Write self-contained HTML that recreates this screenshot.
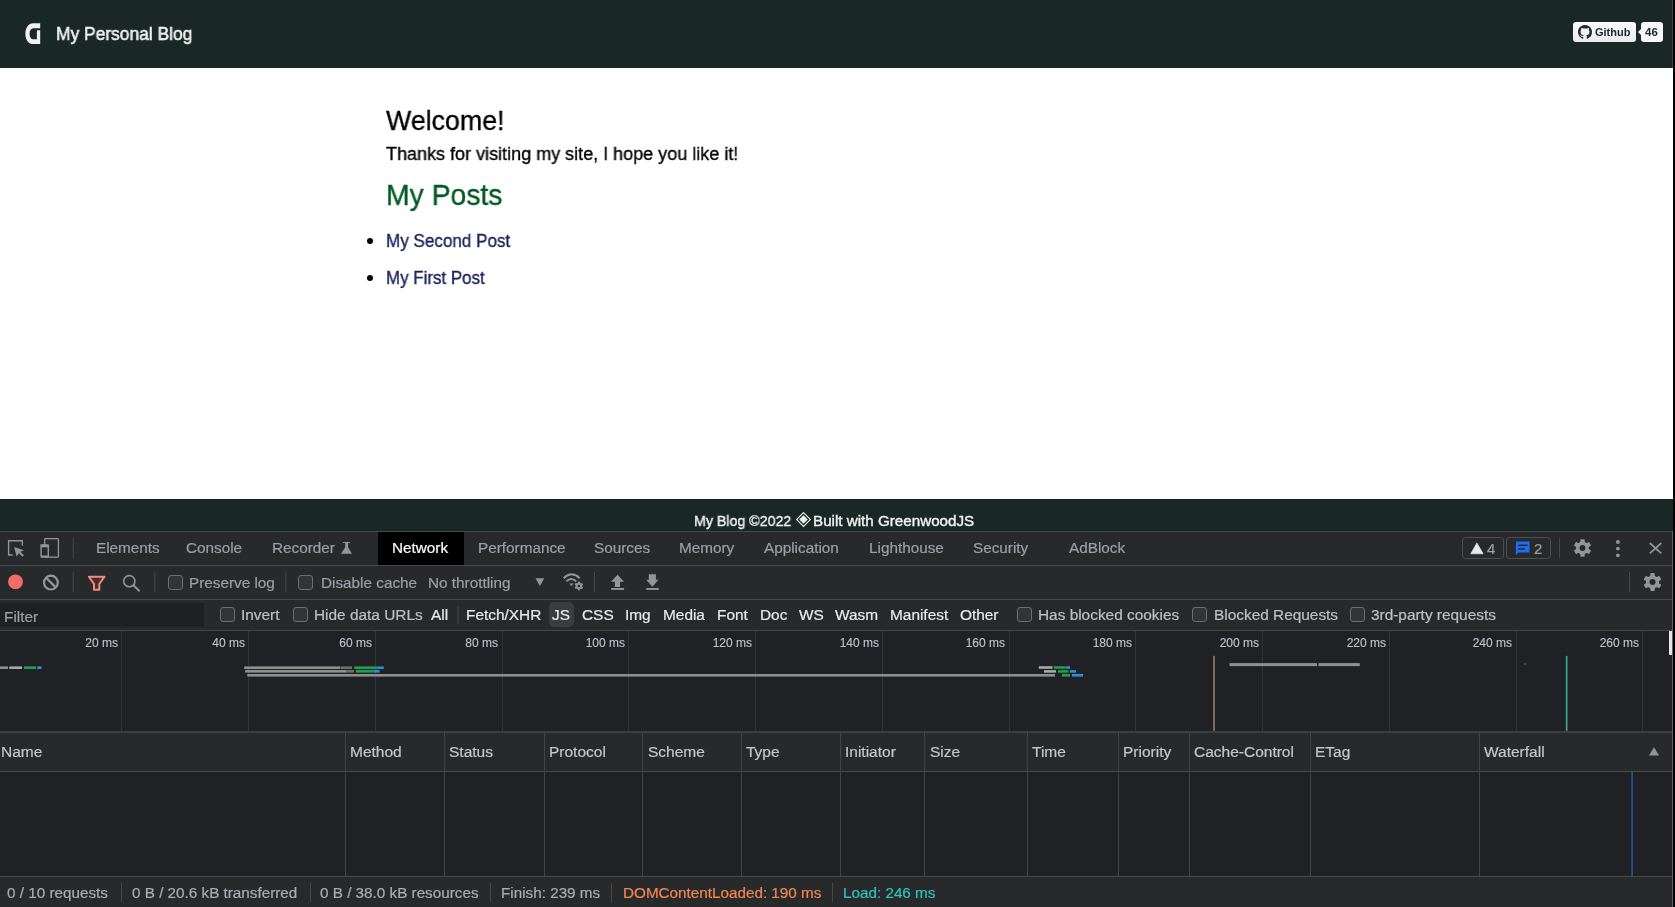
<!DOCTYPE html>
<html><head><meta charset="utf-8">
<style>
*{margin:0;padding:0;box-sizing:border-box}
html,body{width:1675px;height:907px;overflow:hidden;background:#fff}
body{position:relative;font-family:"Liberation Sans",sans-serif}
.a{position:absolute;white-space:nowrap;line-height:1;will-change:transform}
.bt{-webkit-text-stroke:0.35px currentColor}
.bt2{-webkit-text-stroke:0.55px currentColor}
.bt3{-webkit-text-stroke:0.4px currentColor}
.t15{font-size:15px;-webkit-text-stroke:0.2px currentColor}
.hdr{position:absolute;left:0;top:0;width:1673px;height:68px;background:#1a2825}
.ftr{position:absolute;left:0;top:499px;width:1673px;height:32px;background:#1a2825;overflow:hidden}
.rs{position:absolute;left:1673px;top:0;width:2px;height:907px;background:#000}
.dt{position:absolute;left:0;top:531px;width:1673px;height:376px;background:#202124;overflow:hidden;color:#9aa0a6}
.bar{position:absolute;left:0;width:1673px;background:#28292b}
.hl{position:absolute;left:0;width:1673px;height:1px;background:#45474b}
.vs{position:absolute;width:1px;background:#45474b}
.cb{position:absolute;width:15px;height:15px;border:1px solid #6b6e72;border-radius:3px;background:#333437}
.ft{color:#e8eaed}
.gl{position:absolute;top:100px;width:1px;height:100px;background:#333437}
.tl{position:absolute;will-change:transform;-webkit-text-stroke:0.15px currentColor;font-size:12px;color:#bdc1c6;line-height:1;text-align:right;width:60px}
.cl{position:absolute;top:202px;width:1px;height:143px;background:#424347}
.th{position:absolute;will-change:transform;-webkit-text-stroke:0.2px currentColor;top:212.5px;font-size:15.5px;line-height:1;color:#c4c7cb}
.sb{position:absolute;will-change:transform;-webkit-text-stroke:0.2px currentColor;top:354.1px;font-size:15.25px;line-height:1;color:#a9adb2}
.ss{position:absolute;top:352px;width:1px;height:19px;background:#45474b}
</style></head>
<body>
<div class="hdr">
  <div id="logo" class="a" style="left:25px;top:23px;width:16px;height:22px">
    <svg width="16" height="22" viewBox="0 0 16 22"><path d="M15.2 0.3 H8.3 C3.5 0.3 0.4 4.6 0.4 10.7 C0.4 16.8 3.5 21.1 8.3 21.1 H15.2 V7.2 H11.9 V16.3 H8.5 C6 16.3 4.6 14 4.6 10.7 C4.6 7.4 6 5.2 8.5 5.2 H15.2 Z" fill="#eef2ef"/></svg>
  </div>
  <div id="htitle" class="a bt2" style="left:55.6px;top:24.9px;font-size:18.5px;color:#eef2ef;transform-origin:0 0;transform:scaleX(0.94)">My Personal Blog</div>
  <div id="ghbtn" class="a" style="left:1573px;top:22px;width:63px;height:20px;border-radius:3px;background:linear-gradient(#fafbfc,#e9ecef)">
    <svg style="position:absolute;left:5px;top:3px" width="14" height="14" viewBox="0 0 16 16"><path fill="#24292e" d="M8 0C3.58 0 0 3.580 0 8c0 3.54 2.29 6.53 5.47 7.59.4.07.55-.17.55-.38 0-.19-.01-.82-.01-1.49-2.01.37-2.53-.49-2.69-.94-.09-.23-.48-.94-.82-1.13-.28-.15-.68-.52-.01-.53.63-.01 1.08.58 1.23.82.72 1.21 1.87.87 2.33.66.07-.52.28-.87.51-1.07-1.78-.2-3.64-.89-3.64-3.95 0-.87.31-1.59.82-2.15-.08-.2-.36-1.02.08-2.12 0 0 .67-.21 2.2.82.64-.18 1.32-.27 2-.27.68 0 1.36.09 2 .27 1.53-1.04 2.2-.82 2.2-.82.44 1.1.16 1.92.08 2.12.51.56.82 1.27.82 2.15 0 3.07-1.87 3.75-3.65 3.95.29.25.54.73.54 1.48 0 1.07-.01 1.93-.01 2.2 0 .21.15.46.55.38A8.013 8.013 0 0016 8c0-4.42-3.58-8-8-8z"/></svg>
    <div class="a" style="left:22px;top:4.5px;font-size:11px;font-weight:bold;color:#24292e">Github</div>
  </div>
  <div class="a" style="left:1638px;top:29px;width:0;height:0;border-top:3px solid transparent;border-bottom:3px solid transparent;border-right:3px solid #f6f8fa"></div>
  <div id="ghcnt" class="a" style="left:1641px;top:22px;width:22px;height:20px;border-radius:3px;background:#f6f8fa">
    <div class="a" style="left:4px;top:4.5px;font-size:11.5px;font-weight:bold;color:#24292e">46</div>
  </div>
</div>

<div id="welcome" class="a bt" style="left:386px;top:106.3px;font-size:28.5px;color:#020202;transform-origin:0 0;transform:scaleX(0.939)">Welcome!</div>
<div id="thanks" class="a bt" style="left:386px;top:144.8px;font-size:18.3px;color:#020202;transform-origin:0 0;transform:scaleX(0.985)">Thanks for visiting my site, I hope you like it!</div>
<div id="myposts" class="a bt" style="left:386px;top:180px;font-size:29.8px;color:#005a27;transform-origin:0 0;transform:scaleX(0.951)">My Posts</div>
<div class="a" style="left:367px;top:238px;width:6px;height:6px;border-radius:50%;background:#020202"></div>
<div id="post2" class="a bt" style="left:386px;top:232.3px;font-size:18.2px;color:#17215a;transform-origin:0 0;transform:scaleX(0.938)">My Second Post</div>
<div class="a" style="left:367px;top:275px;width:6px;height:6px;border-radius:50%;background:#020202"></div>
<div id="post1" class="a bt" style="left:386px;top:269.4px;font-size:18.2px;color:#17215a;transform-origin:0 0;transform:scaleX(0.930)">My First Post</div>

<div class="ftr">
  <div id="footer1" class="a bt3" style="left:693.5px;top:13.6px;font-size:15.2px;color:#eef2ef;transform-origin:0 0;transform:scaleX(0.935)">My Blog ©2022</div>
<svg class="a" style="left:795px;top:13px" width="17" height="16" viewBox="0 0 17 16"><path d="M8.5 0.6 L15.4 7.5 L8.5 14.4 L1.6 7.5 Z" fill="none" stroke="#eef2ef" stroke-width="1.1"/><path d="M8.5 3.2 L12.8 7.5 L8.5 11.8 L4.2 7.5 Z" fill="#eef2ef"/></svg>
<div id="footer2" class="a bt3" style="left:813px;top:13.6px;font-size:15.2px;color:#eef2ef;transform-origin:0 0">Built with GreenwoodJS</div>
</div>

<div class="rs"></div>

<div class="dt">
<div class="bar" style="top:1px;height:33px"></div>
<div class="hl" style="top:0"></div>
<div class="hl" style="top:34px"></div>
<div class="bar" style="top:35px;height:33px"></div>
<div class="hl" style="top:68px"></div>
<div class="bar" style="top:69px;height:30px"></div>
<div class="hl" style="top:99px"></div>
<div class="a" style="left:378px;top:1px;width:86px;height:33px;background:#000"></div>
<div id="tab_Elements" class="a t15" style="left:96.2px;top:8.7px;font-size:15.3px;color:#9aa0a6">Elements</div>
<div id="tab_Console" class="a t15" style="left:186.4px;top:8.7px;font-size:15.3px;color:#9aa0a6">Console</div>
<div id="tab_Recorder" class="a t15" style="left:271.9px;top:8.7px;font-size:15.3px;color:#9aa0a6">Recorder</div>
<div id="tab_Network" class="a t15" style="left:392.1px;top:8.7px;font-size:15.3px;color:#fff">Network</div>
<div id="tab_Performance" class="a t15" style="left:477.9px;top:8.7px;font-size:15.3px;color:#9aa0a6">Performance</div>
<div id="tab_Sources" class="a t15" style="left:594.2px;top:8.7px;font-size:15.3px;color:#9aa0a6">Sources</div>
<div id="tab_Memory" class="a t15" style="left:678.8px;top:8.7px;font-size:15.3px;color:#9aa0a6">Memory</div>
<div id="tab_Application" class="a t15" style="left:764.4px;top:8.7px;font-size:15.3px;color:#9aa0a6">Application</div>
<div id="tab_Lighthouse" class="a t15" style="left:869.4px;top:8.7px;font-size:15.3px;color:#9aa0a6">Lighthouse</div>
<div id="tab_Security" class="a t15" style="left:972.7px;top:8.7px;font-size:15.3px;color:#9aa0a6">Security</div>
<div id="tab_AdBlock" class="a t15" style="left:1069.1px;top:8.7px;font-size:15.3px;color:#9aa0a6">AdBlock</div>
<div id="tb_Preserve" class="a t15" style="left:189.2px;top:44px;font-size:15.3px;color:#9aa0a6">Preserve log</div>
<div id="tb_Disable" class="a t15" style="left:320.5px;top:44px;font-size:15.3px;color:#9aa0a6">Disable cache</div>
<div id="tb_No" class="a t15" style="left:428.4px;top:44px;font-size:15.3px;color:#9aa0a6">No throttling</div>
<div class="a" style="left:0;top:72px;width:204px;height:24px;background:#1f2022"></div>
<div class="a" style="left:549px;top:71px;width:25px;height:25px;border-radius:5px;background:#3b3c3f"></div>
<div id="f_Filter" class="a t15" style="left:3.7px;top:77.8px;font-size:15.4px;color:#9aa0a6">Filter</div>
<div id="f_Invert" class="a t15" style="left:241.4px;top:76px;font-size:15.4px;color:#bdc1c6">Invert</div>
<div id="f_Hide" class="a t15" style="left:314.3px;top:76px;font-size:15.4px;color:#bdc1c6">Hide data URLs</div>
<div id="f_All" class="a t15" style="left:431.3px;top:76px;font-size:15.4px;color:#e8eaed">All</div>
<div id="f_FetchXHR" class="a t15" style="left:466.4px;top:76px;font-size:15.4px;color:#e8eaed">Fetch/XHR</div>
<div id="f_JS" class="a t15" style="left:551.7px;top:76px;font-size:15.4px;color:#e8eaed">JS</div>
<div id="f_CSS" class="a t15" style="left:581.8px;top:76px;font-size:15.4px;color:#e8eaed">CSS</div>
<div id="f_Img" class="a t15" style="left:625.3px;top:76px;font-size:15.4px;color:#e8eaed">Img</div>
<div id="f_Media" class="a t15" style="left:663.4px;top:76px;font-size:15.4px;color:#e8eaed">Media</div>
<div id="f_Font" class="a t15" style="left:716.9px;top:76px;font-size:15.4px;color:#e8eaed">Font</div>
<div id="f_Doc" class="a t15" style="left:759.7px;top:76px;font-size:15.4px;color:#e8eaed">Doc</div>
<div id="f_WS" class="a t15" style="left:799.1px;top:76px;font-size:15.4px;color:#e8eaed">WS</div>
<div id="f_Wasm" class="a t15" style="left:835.2px;top:76px;font-size:15.4px;color:#e8eaed">Wasm</div>
<div id="f_Manifest" class="a t15" style="left:890.0px;top:76px;font-size:15.4px;color:#e8eaed">Manifest</div>
<div id="f_Other" class="a t15" style="left:959.6px;top:76px;font-size:15.4px;color:#e8eaed">Other</div>
<div id="f_Has" class="a t15" style="left:1038.1px;top:76px;font-size:15.4px;color:#bdc1c6">Has blocked cookies</div>
<div id="f_Blocked" class="a t15" style="left:1213.8px;top:76px;font-size:15.4px;color:#bdc1c6">Blocked Requests</div>
<div id="f_3rd-party" class="a t15" style="left:1371.0px;top:76px;font-size:15.4px;color:#bdc1c6">3rd-party requests</div>
<div class="cb" style="left:168px;top:44px"></div>
<div class="cb" style="left:298px;top:44px"></div>
<div class="cb" style="left:220px;top:76.4px"></div>
<div class="cb" style="left:293px;top:76.4px"></div>
<div class="cb" style="left:1017.4px;top:76.4px"></div>
<div class="cb" style="left:1192.3px;top:76.4px"></div>
<div class="cb" style="left:1350px;top:76.4px"></div>
<div class="gl" style="left:121.25px"></div>
<div class="tl" style="left:58.15px;top:105.7px">20 ms</div>
<div class="gl" style="left:248.00px"></div>
<div class="tl" style="left:184.90px;top:105.7px">40 ms</div>
<div class="gl" style="left:374.75px"></div>
<div class="tl" style="left:311.65px;top:105.7px">60 ms</div>
<div class="gl" style="left:501.50px"></div>
<div class="tl" style="left:438.40px;top:105.7px">80 ms</div>
<div class="gl" style="left:628.25px"></div>
<div class="tl" style="left:565.15px;top:105.7px">100 ms</div>
<div class="gl" style="left:755.00px"></div>
<div class="tl" style="left:691.90px;top:105.7px">120 ms</div>
<div class="gl" style="left:881.75px"></div>
<div class="tl" style="left:818.65px;top:105.7px">140 ms</div>
<div class="gl" style="left:1008.50px"></div>
<div class="tl" style="left:945.40px;top:105.7px">160 ms</div>
<div class="gl" style="left:1135.25px"></div>
<div class="tl" style="left:1072.15px;top:105.7px">180 ms</div>
<div class="gl" style="left:1262.00px"></div>
<div class="tl" style="left:1198.90px;top:105.7px">200 ms</div>
<div class="gl" style="left:1388.75px"></div>
<div class="tl" style="left:1325.65px;top:105.7px">220 ms</div>
<div class="gl" style="left:1515.50px"></div>
<div class="tl" style="left:1452.40px;top:105.7px">240 ms</div>
<div class="gl" style="left:1642.25px"></div>
<div class="tl" style="left:1579.15px;top:105.7px">260 ms</div>
<div class="hl" style="top:200px;height:2px;background:#3c3e42"></div>
<div class="a" style="left:0;top:202px;width:1673px;height:38px;background:#28292b"></div>
<div class="hl" style="top:240px"></div>
<div class="hl" style="top:345px"></div>
<div class="a" style="left:0;top:346px;width:1673px;height:30px;background:#28292b"></div>
<div class="cl" style="left:345px"></div>
<div class="cl" style="left:444px"></div>
<div class="cl" style="left:544px"></div>
<div class="cl" style="left:642px"></div>
<div class="cl" style="left:741px"></div>
<div class="cl" style="left:840px"></div>
<div class="cl" style="left:924px"></div>
<div class="cl" style="left:1027px"></div>
<div class="cl" style="left:1118px"></div>
<div class="cl" style="left:1189px"></div>
<div class="cl" style="left:1310px"></div>
<div class="cl" style="left:1479px"></div>
<div id="h_Name" class="th" style="left:0.7px">Name</div>
<div id="h_Method" class="th" style="left:350.3px">Method</div>
<div id="h_Status" class="th" style="left:448.7px">Status</div>
<div id="h_Protocol" class="th" style="left:549.0px">Protocol</div>
<div id="h_Scheme" class="th" style="left:647.7px">Scheme</div>
<div id="h_Type" class="th" style="left:746.3px">Type</div>
<div id="h_Initiator" class="th" style="left:844.9px">Initiator</div>
<div id="h_Size" class="th" style="left:929.5px">Size</div>
<div id="h_Time" class="th" style="left:1032.2px">Time</div>
<div id="h_Priority" class="th" style="left:1123.0px">Priority</div>
<div id="h_Cache-Control" class="th" style="left:1194.0px">Cache-Control</div>
<div id="h_ETag" class="th" style="left:1315.3px">ETag</div>
<div id="h_Waterfall" class="th" style="left:1484.3px">Waterfall</div>
<div id="s0" class="sb" style="left:7.4px;color:#a9adb2">0 / 10 requests</div>
<div id="s1" class="sb" style="left:131.7px;color:#a9adb2">0 B / 20.6 kB transferred</div>
<div id="s2" class="sb" style="left:320.0px;color:#a9adb2">0 B / 38.0 kB resources</div>
<div id="s3" class="sb" style="left:501.2px;color:#a9adb2">Finish: 239 ms</div>
<div id="s4" class="sb" style="left:622.6px;color:#f08850">DOMContentLoaded: 190 ms</div>
<div id="s5" class="sb" style="left:843.2px;color:#2cc6bc">Load: 246 ms</div>
<div class="ss" style="left:120.5px"></div>
<div class="ss" style="left:309.5px"></div>
<div class="ss" style="left:490.0px"></div>
<div class="ss" style="left:610.7px"></div>
<div class="ss" style="left:832.0px"></div>
<div class="a t15" style="left:1486.5px;top:9.6px;color:#9aa0a6">4</div><div class="a t15" style="left:1533.8px;top:9.6px;color:#9aa0a6">2</div>
</div>
<svg class="a" style="left:0;top:0" width="1675" height="907" viewBox="0 0 1675 907">
<path d="M12.8 555 H8.6 V540.8 H22.3 V545.6" stroke="#939598" stroke-width="1.4" fill="none"/>
<path d="M14.2 547 L24 550.3 L20.4 551.7 L23.9 555.2 L22.4 556.7 L18.9 553.2 L16.5 556.6 Z" fill="#939598"/>
<rect x="44.7" y="538.6" width="13.7" height="18.6" rx="0.8" stroke="#939598" stroke-width="1.3" fill="none"/>
<rect x="40.4" y="544.2" width="8.6" height="13.6" rx="1" fill="#939598"/>
<rect x="41.8" y="547.3" width="5.8" height="8.2" fill="#28292b"/>
<rect x="72.7" y="538" width="1" height="20" fill="#45474b"/>
<rect x="1559" y="538" width="1" height="20" fill="#45474b"/>
<path d="M342.9 542 H350.1 V543 H348 V547.3 L352 553.7 H341 L345.2 547.3 V543 H342.9 Z" fill="#939598"/>
<rect x="1462.5" y="537.5" width="41" height="21" rx="3" stroke="#4b4e52" stroke-width="1" fill="none"/>
<path d="M1476.9 542.9 L1483.2 553.8 H1470.7 Z" fill="#e8eaed" stroke="#e8eaed" stroke-width="0.6" stroke-linejoin="round"/>
<rect x="1506.5" y="537.5" width="44" height="21" rx="3" stroke="#4b4e52" stroke-width="1" fill="none"/>
<path d="M1515.9 541.4 H1529.6 V552.6 H1518.6 L1515.9 555 Z" fill="#1a6ff0"/>
<rect x="1518.3" y="544.6" width="9.3" height="1.4" fill="#202124"/>
<rect x="1518.3" y="548.2" width="6.5" height="1.4" fill="#202124"/>
<circle cx="1582.5" cy="548" r="6.4" fill="#939598"/><rect x="1580.30" y="539.30" width="4.4" height="8.7" rx="0.8" fill="#939598" transform="rotate(0 1582.5 548)"/><rect x="1580.30" y="539.30" width="4.4" height="8.7" rx="0.8" fill="#939598" transform="rotate(60 1582.5 548)"/><rect x="1580.30" y="539.30" width="4.4" height="8.7" rx="0.8" fill="#939598" transform="rotate(120 1582.5 548)"/><rect x="1580.30" y="539.30" width="4.4" height="8.7" rx="0.8" fill="#939598" transform="rotate(180 1582.5 548)"/><rect x="1580.30" y="539.30" width="4.4" height="8.7" rx="0.8" fill="#939598" transform="rotate(240 1582.5 548)"/><rect x="1580.30" y="539.30" width="4.4" height="8.7" rx="0.8" fill="#939598" transform="rotate(300 1582.5 548)"/><circle cx="1582.5" cy="548" r="2.9" fill="#28292b"/>
<circle cx="1617.9" cy="542" r="1.9" fill="#939598"/>
<circle cx="1617.9" cy="548.6" r="1.9" fill="#939598"/>
<circle cx="1617.9" cy="555.3" r="1.9" fill="#939598"/>
<path d="M1649.8 543 L1661.3 553.3 M1661.3 543 L1649.8 553.3" stroke="#939598" stroke-width="1.7"/>
<circle cx="15.5" cy="581.8" r="7.4" fill="#f06e69"/>
<circle cx="50.9" cy="582.6" r="6.9" stroke="#939598" stroke-width="2.2" fill="none"/>
<path d="M46.1 577.8 L55.7 587.4" stroke="#939598" stroke-width="2.3"/>
<rect x="72.7" y="572" width="1" height="20" fill="#45474b"/>
<rect x="154.3" y="572" width="1" height="20" fill="#45474b"/>
<rect x="285.3" y="572" width="1" height="20" fill="#45474b"/>
<rect x="594" y="572" width="1" height="20" fill="#45474b"/>
<rect x="1629" y="572" width="1" height="20" fill="#45474b"/>
<path d="M88.9 576.7 H104.5 L99.3 584 V589.8 H94 V584 Z" fill="#4d2d2c" stroke="#f28b82" stroke-width="2" stroke-linejoin="round"/>
<circle cx="129.3" cy="581.2" r="5.6" stroke="#939598" stroke-width="1.6" fill="none"/>
<path d="M133.4 585.3 L139.6 591.3" stroke="#939598" stroke-width="1.9"/>
<path d="M535.5 578.3 H544.3 L539.9 586 Z" fill="#939598"/>
<path d="M563.6 578.2 Q571.6 570.5 579.8 578.2" stroke="#939598" stroke-width="1.9" fill="none"/>
<path d="M566.4 581.3 Q571.3 576.8 576.2 581.3" stroke="#939598" stroke-width="1.9" fill="none"/>
<path d="M569.2 583.4 H573.6 L571.4 586 Z" fill="#939598"/>
<circle cx="578.9" cy="586" r="3.2" fill="#939598"/><rect x="577.80" y="581.60" width="2.2" height="4.4" rx="0.8" fill="#939598" transform="rotate(0 578.9 586)"/><rect x="577.80" y="581.60" width="2.2" height="4.4" rx="0.8" fill="#939598" transform="rotate(60 578.9 586)"/><rect x="577.80" y="581.60" width="2.2" height="4.4" rx="0.8" fill="#939598" transform="rotate(120 578.9 586)"/><rect x="577.80" y="581.60" width="2.2" height="4.4" rx="0.8" fill="#939598" transform="rotate(180 578.9 586)"/><rect x="577.80" y="581.60" width="2.2" height="4.4" rx="0.8" fill="#939598" transform="rotate(240 578.9 586)"/><rect x="577.80" y="581.60" width="2.2" height="4.4" rx="0.8" fill="#939598" transform="rotate(300 578.9 586)"/><circle cx="578.9" cy="586" r="1.3" fill="#28292b"/>
<path d="M617.5 574.7 L624.1 581.8 H620.1 V587 H614.9 V581.8 H611 Z" fill="#939598"/><rect x="611.2" y="588" width="12.9" height="1.9" fill="#939598"/>
<path d="M652.4 586.8 L658.5 579.7 H655.9 V574.3 H648.8 V579.7 H646.2 Z" fill="#939598"/><rect x="646.3" y="588" width="12.5" height="1.9" fill="#939598"/>
<circle cx="1652.5" cy="582.1" r="6.6" fill="#939598"/><rect x="1650.30" y="573.10" width="4.4" height="9" rx="0.8" fill="#939598" transform="rotate(0 1652.5 582.1)"/><rect x="1650.30" y="573.10" width="4.4" height="9" rx="0.8" fill="#939598" transform="rotate(60 1652.5 582.1)"/><rect x="1650.30" y="573.10" width="4.4" height="9" rx="0.8" fill="#939598" transform="rotate(120 1652.5 582.1)"/><rect x="1650.30" y="573.10" width="4.4" height="9" rx="0.8" fill="#939598" transform="rotate(180 1652.5 582.1)"/><rect x="1650.30" y="573.10" width="4.4" height="9" rx="0.8" fill="#939598" transform="rotate(240 1652.5 582.1)"/><rect x="1650.30" y="573.10" width="4.4" height="9" rx="0.8" fill="#939598" transform="rotate(300 1652.5 582.1)"/><circle cx="1652.5" cy="582.1" r="3" fill="#28292b"/>
<rect x="457.5" y="606" width="1" height="18" fill="#45474b"/>
<rect x="0" y="666.40" width="8.00" height="2.6" fill="#8f8f8f"/><rect x="9.3" y="666.40" width="12.70" height="2.6" fill="#a8a8a8"/><rect x="24" y="666.40" width="12.00" height="2.6" fill="#1f9e56"/><rect x="37.2" y="666.40" width="4.30" height="2.6" fill="#2e8fd2"/>
<rect x="244.2" y="666.40" width="95.90" height="2.6" fill="#8f8f8f"/><rect x="340.5" y="666.40" width="11.50" height="2.6" fill="#6f6f6f"/><rect x="354.3" y="666.40" width="23.40" height="2.6" fill="#1f9e56"/><rect x="377.7" y="666.40" width="6.10" height="2.6" fill="#2e8fd2"/>
<rect x="245.2" y="670.00" width="101.50" height="2.6" fill="#8f8f8f"/><rect x="347" y="670.00" width="7.00" height="2.6" fill="#6f6f6f"/><rect x="355.8" y="670.00" width="17.30" height="2.6" fill="#1f9e56"/><rect x="373.3" y="670.00" width="6.30" height="2.6" fill="#2e8fd2"/>
<rect x="247.3" y="674.00" width="807.70" height="2.6" fill="#8f8f8f"/>
<rect x="1038.8" y="666.20" width="13.70" height="2.6" fill="#a8a8a8"/><rect x="1053.7" y="666.20" width="12.00" height="2.6" fill="#1f9e56"/><rect x="1066" y="666.20" width="4.00" height="2.6" fill="#2e8fd2"/>
<rect x="1044" y="670.10" width="12.00" height="2.6" fill="#a8a8a8"/><rect x="1058" y="670.10" width="10.50" height="2.6" fill="#1f9e56"/><rect x="1070" y="670.10" width="6.00" height="2.6" fill="#2e8fd2"/>
<rect x="1062" y="674.00" width="8.00" height="2.6" fill="#1f9e56"/><rect x="1072" y="674.00" width="11.00" height="2.6" fill="#2e8fd2"/>
<rect x="1229.5" y="663.10" width="87.50" height="3" fill="#8f8f8f"/><rect x="1318.5" y="663.10" width="41.30" height="3" fill="#8f8f8f"/>
<rect x="1213.1" y="655.8" width="1.8" height="75" fill="#8f6e5e"/>
<rect x="1565.8" y="655.8" width="1.7" height="75" fill="#3aa88c"/>
<rect x="1669" y="631" width="3.2" height="24" fill="#e6e6e6"/><rect x="1524.5" y="663" width="1" height="2" fill="#777"/>
<path d="M1649 755.4 L1654 747.2 L1659 755.4 Z" fill="#939598"/>
<rect x="1631.2" y="771" width="1.8" height="105" fill="#24508c"/>
</svg>
<div class="a" style="left:1672px;top:531px;width:1px;height:376px;background:#5f6165"></div>
<div class="a" style="left:1672px;top:0;width:1px;height:68px;background:#3a4240"></div>
</body></html>
